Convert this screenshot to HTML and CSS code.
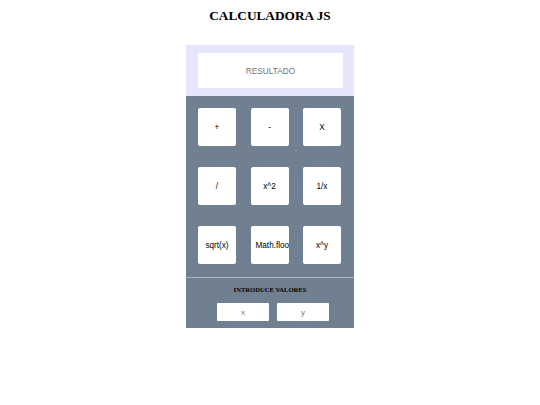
FILE: index.html
```html
<!DOCTYPE html>
<html lang="es">
<head>
<meta charset="utf-8">
<title>Calculadora JS</title>
<link rel="stylesheet" href="styles.css">
</head>
<body>
<h1 class="title">CALCULADORA JS</h1>
<div class="calc">
  <div class="display">
    <input class="result" type="text" placeholder="RESULTADO" readonly>
  </div>
  <div class="keypad">
    <button class="key">+</button>
    <button class="key">-</button>
    <button class="key">X</button>
    <button class="key">/</button>
    <button class="key">x^2</button>
    <button class="key">1/x</button>
    <button class="key">sqrt(x)</button>
    <button class="key key-left">Math.floor</button>
    <button class="key">x^y</button>
  </div>
  <div class="values">
    <div class="values-label">INTRODUCE VALORES</div>
    <div class="values-inputs">
      <input class="val" type="text" placeholder="x">
      <input class="val" type="text" placeholder="y">
    </div>
  </div>
</div>
</body>
</html>
```
FILE: styles.css
```css
* { box-sizing: border-box; }
body {
  margin: 0;
  background: #ffffff;
  font-family: "Liberation Sans", Arial, sans-serif;
}
.title {
  margin: 0;
  padding-top: 8px;
  font-family: "Liberation Serif", "Times New Roman", serif;
  font-weight: bold;
  font-size: 13.3px;
  line-height: 16px;
  text-align: center;
  color: #000;
}
.calc {
  width: 168px;
  margin: 21px auto 0;
}
.display {
  background: #e6e6fa;
  padding: 8px 11px 8px 12px;
}
.result {
  display: block;
  width: 145px;
  height: 35px;
  border: none;
  outline: none;
  background: #fff;
  text-align: center;
  font-family: "Liberation Sans", Arial, sans-serif;
  font-size: 8.3px;
  padding: 0;
}
.result::placeholder, .val::placeholder {
  color: #757575;
}
.keypad {
  background: #708090;
  padding: 12px 13px 13px 12px;
  display: grid;
  grid-template-columns: repeat(3, 38px);
  justify-content: space-between;
  row-gap: 21px;
}
.key {
  width: 38px;
  height: 38px;
  background: #fff;
  border: none;
  border-radius: 2px;
  padding: 1px 5px;
  font-family: "Liberation Sans", Arial, sans-serif;
  font-size: 8.2px;
  color: #000;
  overflow: hidden;
  white-space: nowrap;
}
.key-left {
  text-align: left;
}
.values {
  background: #708090;
  border-top: 1px solid #aeb7c0;
  padding: 8px 0 7px;
}
.values-label {
  font-family: "Liberation Serif", "Times New Roman", serif;
  font-weight: bold;
  font-size: 6.6px;
  line-height: 8px;
  text-align: center;
  color: #000;
}
.values-inputs {
  margin-top: 9px;
  display: flex;
  justify-content: center;
  gap: 8px;
  padding-left: 6px;
}
.val {
  width: 52px;
  height: 18px;
  border: none;
  outline: none;
  background: #fff;
  border-radius: 1px;
  text-align: center;
  font-family: "Liberation Sans", Arial, sans-serif;
  font-size: 8px;
  padding: 0;
}
```
